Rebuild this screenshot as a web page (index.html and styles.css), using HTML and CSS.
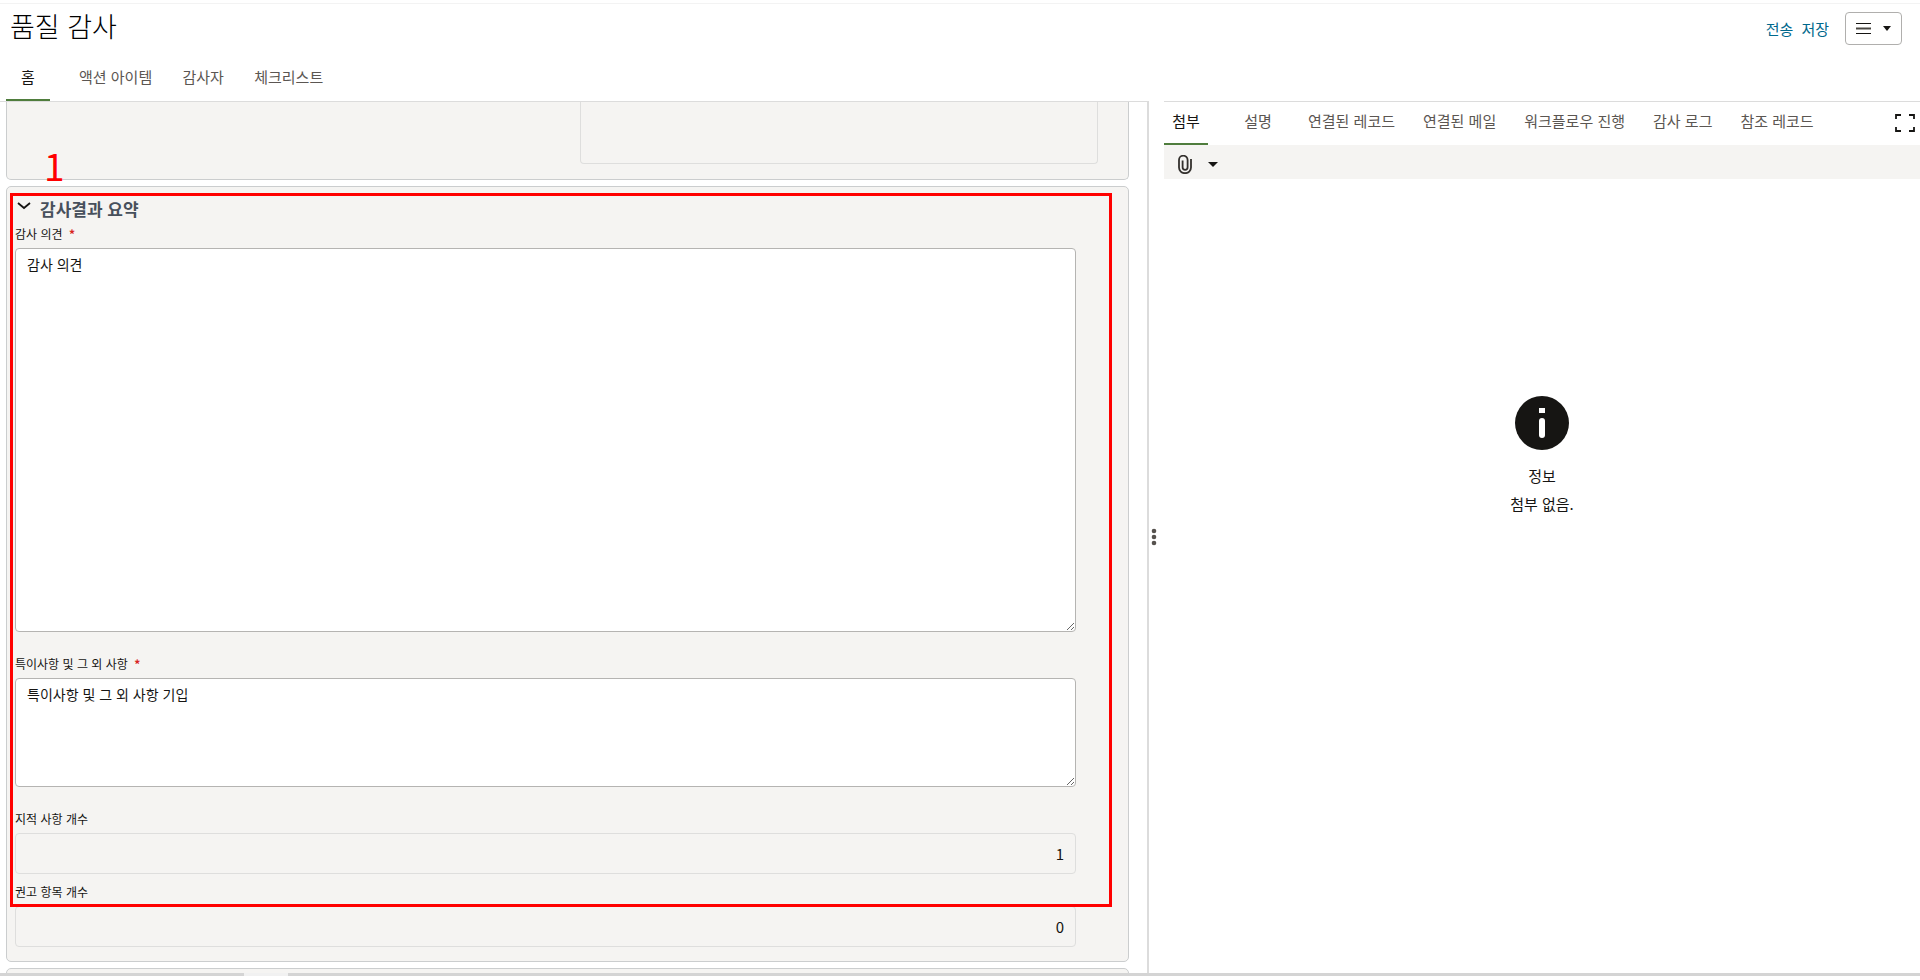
FILE: index.html
```html
<!DOCTYPE html>
<html lang="ko">
<head>
    <meta charset="UTF-8">
    <title>품질 감사</title>
    <link rel="stylesheet" href="styles.css">
</head>
<body>
    <header class="header">
        <h1>품질 감사</h1>
        <div class="actions">
            <a href="#">전송</a>
            <a href="#">저장</a>
            <button type="button" class="menu-button" aria-label="메뉴">
                <svg width="15" height="13" viewBox="0 0 15 13"><path d="M0 1.500h15M0 11.500h15" stroke="#161513" stroke-width="1"/><path d="M0 6.500h15" stroke="#4b4843" stroke-width="2"/></svg>
                <svg width="8" height="5" viewBox="0 0 8 5"><path d="M0 0h8L4 5z" fill="#161513"/></svg>
            </button>
        </div>
    </header>

    <nav class="tabs">
        <button type="button" class="tab active">홈</button>
        <button type="button" class="tab">액션 아이템</button>
        <button type="button" class="tab">감사자</button>
        <button type="button" class="tab">체크리스트</button>
    </nav>

    <main class="content">
        <div class="form-pane">
            <section class="panel panel-prev">
                <div class="empty-box"></div>
            </section>

            <section class="panel summary">
                <h2>
                    <svg width="14" height="8" viewBox="0 0 14 8"><path d="M1 1l6 5 6-5" fill="none" stroke="#161513" stroke-width="1.8"/></svg>
                    감사결과 요약
                </h2>
                <label for="opinion">감사 의견 <span class="required">*</span></label>
                <textarea id="opinion" class="large">감사 의견</textarea>

                <label for="remarks">특이사항 및 그 외 사항 <span class="required">*</span></label>
                <textarea id="remarks" class="small">특이사항 및 그 외 사항 기입</textarea>

                <label for="findings">지적 사항 개수</label>
                <input type="text" id="findings" value="1" readonly>

                <label for="recommendations">권고 항목 개수</label>
                <input type="text" id="recommendations" value="0" readonly>

                <!-- Marked area -->
                <div class="marker"><span>1</span></div>
            </section>

            <section class="panel panel-next"></section>
        </div>

        <div class="splitter">
            <svg width="6" height="18" viewBox="0 0 6 18" fill="#56524e"><circle cx="3" cy="3" r="2.3"/><circle cx="3" cy="9" r="2.3"/><circle cx="3" cy="15" r="2.3"/></svg>
        </div>

        <aside class="side-pane">
            <nav class="tabs side-tabs">
                <button type="button" class="tab active">첨부</button>
                <button type="button" class="tab">설명</button>
                <button type="button" class="tab">연결된 레코드</button>
                <button type="button" class="tab">연결된 메일</button>
                <button type="button" class="tab">워크플로우 진행</button>
                <button type="button" class="tab">감사 로그</button>
                <button type="button" class="tab">참조 레코드</button>
                <button type="button" class="expand" aria-label="전체 화면">
                    <svg width="20" height="18" viewBox="0 0 20 18"><path d="M1 5V1h5M14 1h5v4M19 13v4h-5M6 17H1v-4" fill="none" stroke="#161513" stroke-width="1.8"/></svg>
                </button>
            </nav>
            <div class="toolbar">
                <button type="button" aria-label="첨부 추가">
                    <svg width="14" height="19" viewBox="0 0 14 19"><path d="M13 4v8.500a6 5.700 0 0 1-12 0V5a4.200 4.200 0 0 1 8.600 0v7.300a2.500 2.500 0 0 1-5 0V5.500" fill="none" stroke="#33302d" stroke-width="1.8"/></svg>
                    <svg width="10" height="5" viewBox="0 0 10 5"><path d="M0 0h10L5 5z" fill="#161513"/></svg>
                </button>
            </div>
            <div class="info">
                <svg width="54" height="54" viewBox="0 0 54 54"><circle cx="27" cy="27" r="27" fill="#161513"/><path d="M24 12h6v5h-6z" fill="#fff"/><rect x="24" y="22" width="6" height="20" rx="3" fill="#fff"/></svg>
                <p>정보</p>
                <p>첨부 없음.</p>
            </div>
        </aside>
    </main>

    <footer class="scrollbar"><span></span></footer>
</body>
</html>
```
FILE: styles.css
```css
* {
    box-sizing: border-box;
}

body {
    margin: 0;
    height: 100vh;
    padding: 3px 0 4px;
    display: flex;
    flex-direction: column;
    overflow: hidden;
    font-family: "Noto Sans CJK KR", sans-serif;
    font-size: 15px;
    line-height: 20px;
    color: #161513;
    background-color: #fff;
}

button {
    font: inherit;
    color: inherit;
    background: none;
    border: none;
    padding: 0;
    cursor: pointer;
}

svg {
    display: block;
}

.header {
    display: flex;
    justify-content: space-between;
    align-items: flex-start;
    padding: 8px 18px 0 10px;
    border-top: 1px solid #f3f3f3;
}

h1 {
    margin: 0;
    font-size: 27px;
    font-weight: 300;
    line-height: 28px;
    color: #000;
}

.actions {
    display: flex;
    align-items: center;
    gap: 8px;
}

.actions a {
    color: #00688c;
    text-decoration: none;
}

.menu-button {
    display: flex;
    align-items: center;
    gap: 12px;
    height: 33px;
    margin-left: 8px;
    padding: 0 10px;
    border: 1px solid #b0afad;
    border-radius: 4px;
}

.tabs {
    display: flex;
    height: 56px;
    padding-left: 6px;
}

.tab {
    min-width: 72px;
    padding: 8px 15px 0;
    color: #5b5652;
    white-space: nowrap;
}

.tab.active {
    min-width: 44px;
    margin-right: 14px;
    padding: 10px 0 0;
    border-bottom: 2px solid #4f7d3d;
    color: #161513;
}

.content {
    flex: 1;
    display: grid;
    grid-template-columns: 1149fr 15px 756fr;
    grid-template-rows: 100%;
    min-height: 0;
}

.form-pane {
    min-width: 0;
    display: flex;
    flex-direction: column;
    gap: 6px;
    padding: 0 18px 0 6px;
    border-top: 1px solid #dcdcdc;
    border-right: 2px solid #dcdcdc;
    overflow: hidden;
}

.panel {
    flex-shrink: 0;
    background-color: #f5f4f2;
    border: 1px solid #cbcdce;
    border-radius: 5px;
}

.panel-prev {
    height: 78px;
    padding: 0 30px 15px 51%;
    border-top: none;
    border-radius: 0 0 5px 5px;
}

.empty-box {
    height: 100%;
    border: 1px solid #dededd;
    border-top: none;
    border-radius: 0 0 4px 4px;
}

.summary {
    position: relative;
    display: flex;
    flex-direction: column;
    padding: 11px 52px 14px 8px;
}

h2 {
    display: flex;
    gap: 9px;
    margin: 0 0 4px;
    padding-left: 2px;
    font-size: 17px;
    line-height: 22px;
    color: #47505c;
}

h2 svg {
    margin-top: 4px;
}

label {
    margin-bottom: 4px;
    font-size: 12px;
}

.required {
    margin-left: 3px;
    font-weight: bold;
    color: #d8241f;
}

textarea,
input {
    font: inherit;
    color: #161513;
    border-radius: 4px;
}

textarea {
    padding: 5px 11px;
    margin: 0 0 22px;
    border: 1px solid #b5b4b2;
    background-color: #fff;
    font-size: 14px;
}

.large {
    height: 384px;
}

.small {
    height: 109px;
}

input {
    height: 41px;
    padding: 0 11px;
    margin: 0 0 8px;
    border: 1px solid #dededd;
    background-color: #f5f4f2;
    text-align: right;
}

#recommendations {
    margin-bottom: 0;
}

/* Red frame with its number, over the section */
.marker {
    position: absolute;
    top: 6px;
    bottom: 54px;
    left: 3px;
    right: 16px;
    border: 3px solid #f00;
    pointer-events: none;
}

.marker span {
    position: absolute;
    bottom: 100%;
    left: 31px;
    margin-bottom: 6px;
    font-size: 37px;
    line-height: 50px;
    color: #f00;
}

.panel-next {
    height: 40px;
}

.splitter {
    display: flex;
    align-items: center;
    padding-left: 2px;
}

.side-pane {
    min-width: 0;
    border-top: 1px solid #dcdcdc;
}

.side-tabs {
    height: 43px;
    padding-left: 0;
}

.side-tabs .tab {
    padding: 0 14px 6px;
}

.side-tabs .active {
    padding: 0 0 4px;
}

.expand {
    margin-left: auto;
    padding: 0 5px 2px 0;
}

.toolbar {
    height: 34px;
    display: flex;
    padding: 4px 0 0 14px;
    background-color: #f5f4f2;
}

.toolbar button {
    display: flex;
    align-items: center;
    gap: 16px;
}

.info {
    display: flex;
    flex-direction: column;
    align-items: center;
    padding-top: 217px;
}

.info p {
    margin: 8px 0 0;
}

.info svg {
    margin-bottom: 8px;
}

.scrollbar {
    height: 3px;
    background-color: #d4d4d4;
}

.scrollbar span {
    display: block;
    width: 44px;
    height: 3px;
    margin-left: 244px;
    background-color: #f1f1f1;
}
```
